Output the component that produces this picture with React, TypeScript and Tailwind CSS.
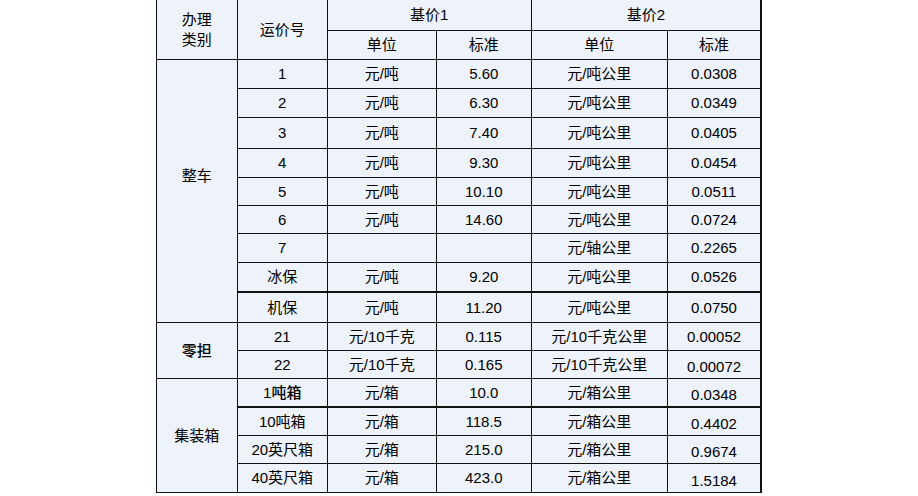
import React from "react";

type Row = {
  no: string;
  u1: string;
  s1: string;
  u2: string;
  s2: string;
  h: number;
  thick?: boolean;
  low?: boolean;
  bold?: boolean;
};

const zhengche: Row[] = [
  { no: "1", u1: "元/吨", s1: "5.60", u2: "元/吨公里", s2: "0.0308", h: 29 },
  { no: "2", u1: "元/吨", s1: "6.30", u2: "元/吨公里", s2: "0.0349", h: 29 },
  { no: "3", u1: "元/吨", s1: "7.40", u2: "元/吨公里", s2: "0.0405", h: 31 },
  { no: "4", u1: "元/吨", s1: "9.30", u2: "元/吨公里", s2: "0.0454", h: 29 },
  { no: "5", u1: "元/吨", s1: "10.10", u2: "元/吨公里", s2: "0.0511", h: 28 },
  { no: "6", u1: "元/吨", s1: "14.60", u2: "元/吨公里", s2: "0.0724", h: 28 },
  { no: "7", u1: "", s1: "", u2: "元/轴公里", s2: "0.2265", h: 29 },
  { no: "冰保", u1: "元/吨", s1: "9.20", u2: "元/吨公里", s2: "0.0526", h: 30, thick: true },
  { no: "机保", u1: "元/吨", s1: "11.20", u2: "元/吨公里", s2: "0.0750", h: 30 },
];

const lingdan: Row[] = [
  { no: "21", u1: "元/10千克", s1: "0.115", u2: "元/10千克公里", s2: "0.00052", h: 28 },
  { no: "22", u1: "元/10千克", s1: "0.165", u2: "元/10千克公里", s2: "0.00072", h: 28, low: true },
];

const box: Row[] = [
  { no: "1吨箱", u1: "元/箱", s1: "10.0", u2: "元/箱公里", s2: "0.0348", h: 29, thick: true, low: true, bold: true },
  { no: "10吨箱", u1: "元/箱", s1: "118.5", u2: "元/箱公里", s2: "0.4402", h: 28, low: true },
  { no: "20英尺箱", u1: "元/箱", s1: "215.0", u2: "元/箱公里", s2: "0.9674", h: 28, low: true },
  { no: "40英尺箱", u1: "元/箱", s1: "423.0", u2: "元/箱公里", s2: "1.5184", h: 29, low: true },
];

const td = "border border-[#111] text-center align-middle p-0";

function Group({ name, rows, nameClass }: { name: string; rows: Row[]; nameClass?: string }) {
  return (
    <>
      {rows.map((r, i) => {
        const b = r.thick ? "border-b-2" : "";
        return (
          <tr key={r.no} style={{ height: r.h }}>
            {i === 0 && (
              <td rowSpan={rows.length} className={`${td} ${nameClass ?? ""}`}>
                {name}
              </td>
            )}
            <td className={`${td} ${b} ${r.bold ? "font-medium" : ""}`}>{r.no}</td>
            <td className={`${td} ${b}`}>{r.u1}</td>
            <td className={`${td} ${b}`}>{r.s1}</td>
            <td className={`${td} ${b}`}>{r.u2}</td>
            <td className={`${td} ${b} border-r-2 ${r.low ? "pt-[5px]" : ""}`}>{r.s2}</td>
          </tr>
        );
      })}
    </>
  );
}

export default function App() {
  return (
    <div className="w-[918px] h-[496px] bg-white overflow-hidden">
      <table
        className="mx-auto table-fixed border-collapse bg-[#edf2fb] text-black text-[15px] leading-none"
        style={{ fontFamily: '"Liberation Sans", "Noto Sans CJK SC", sans-serif' }}
      >
        <colgroup>
          <col className="w-[81px]" />
          <col className="w-[90px]" />
          <col className="w-[109px]" />
          <col className="w-[95px]" />
          <col className="w-[136px]" />
          <col className="w-[94px]" />
        </colgroup>
        <thead>
          <tr className="h-[30px]">
            <td rowSpan={2} className={`${td} border-t-0 leading-[20px] pt-[2px]`}>
              办理
              <br />
              类别
            </td>
            <td rowSpan={2} className={`${td} border-t-0`}>
              运价号
            </td>
            <td colSpan={2} className={`${td} border-t-0`}>
              基价1
            </td>
            <td colSpan={2} className={`${td} border-t-0 border-r-2`}>
              基价2
            </td>
          </tr>
          <tr className="h-[29px]">
            <td className={td}>单位</td>
            <td className={td}>标准</td>
            <td className={td}>单位</td>
            <td className={`${td} border-r-2`}>标准</td>
          </tr>
        </thead>
        <tbody>
          <Group name="整车" rows={zhengche} nameClass="pb-[30px]" />
          <Group name="零担" rows={lingdan} nameClass="font-medium" />
          <Group name="集装箱" rows={box} />
        </tbody>
      </table>
    </div>
  );
}
